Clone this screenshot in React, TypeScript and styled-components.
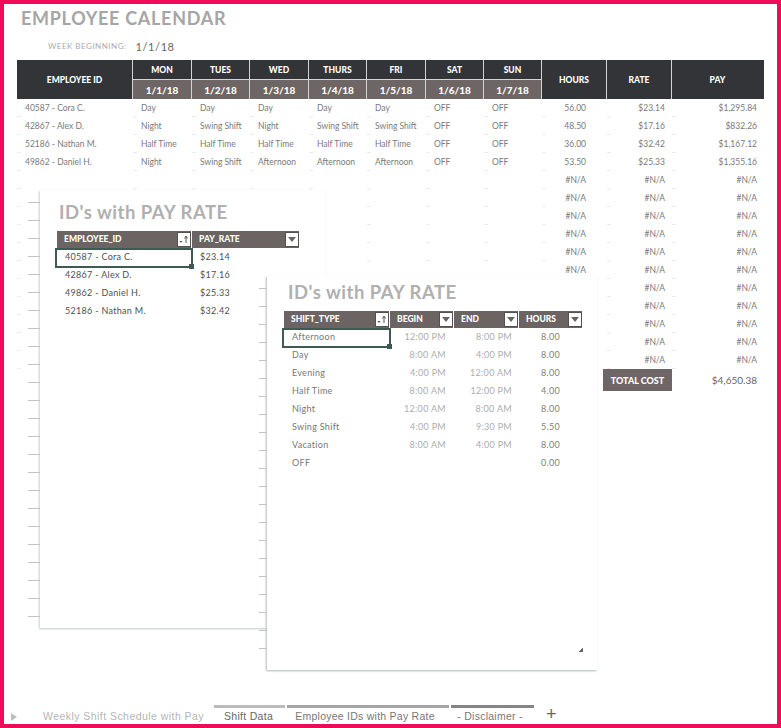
import React from "react";
import styled, { createGlobalStyle } from "styled-components";

const Global = createGlobalStyle`
  html, body { margin: 0; padding: 0; background: #fff; }
  body { font-family: "Lato", "Liberation Sans", sans-serif; }
`;

const Frame = styled.div`
  position: relative;
  width: 781px;
  height: 728px;
  box-sizing: border-box;
  border: 4px solid #ee0b58;
  background: #fff;
  display: flex;
  flex-direction: column;
  overflow: hidden;
`;

const Sheet = styled.div`
  flex: 1;
  padding: 0 0 0 13px;
`;

const Title = styled.h1`
  margin: 2px 0 0 4px;
  font-size: 18px;
  line-height: 24px;
  font-weight: 700;
  letter-spacing: 0.7px;
  color: #a6a6a6;
`;

const WeekRow = styled.div`
  display: flex;
  align-items: center;
  gap: 9px;
  height: 18px;
  margin: 7px 0 5px 31px;
`;

const WeekLabel = styled.span`
  font-size: 8px;
  letter-spacing: 0.5px;
  color: #aaa;
`;

const WeekValue = styled.span`
  font-size: 11px;
  letter-spacing: 0.6px;
  color: #666;
`;

const COLS = "116px 59px 58px 59px 58px 59px 58px 58px 65px 65px 92px";

const HeadGrid = styled.div`
  display: grid;
  grid-template-columns: ${COLS};
  grid-template-rows: 19px 20px;
  width: 747px;
  height: 39px;
`;

const HeadCell = styled.div<{ $col: number; $span?: boolean; $date?: boolean }>`
  display: flex;
  align-items: center;
  justify-content: center;
  grid-column: ${(p) => p.$col};
  grid-row: ${(p) => (p.$span ? "1 / span 2" : p.$date ? "2" : "1")};
  background: ${(p) => (p.$date ? "#6e6664" : "#333438")};
  color: #fff;
  font-size: ${(p) => (p.$date ? 10 : 8.5)}px;
  font-weight: 900;
  box-sizing: border-box;
  border-right: 1px solid ${(p) => (p.$col === 11 ? "transparent" : "#d4d4d4")};
  border-top: ${(p) => (p.$date ? "1px solid #d4d4d4" : "0")};
`;

const Row = styled.div`
  display: grid;
  grid-template-columns: ${COLS};
  width: 747px;
  height: 18px;
`;

const Cell = styled.div<{ $right?: number }>`
  position: relative;
  font-size: 8.5px;
  line-height: 18px;
  font-weight: 400;
  color: #7a7a7a;
  white-space: nowrap;
  overflow: hidden;
  box-sizing: border-box;
  text-align: ${(p) => (p.$right !== undefined ? "right" : "left")};
  padding: ${(p) => (p.$right !== undefined ? `0 ${p.$right}px 0 0` : "0 0 0 8px")};
  &::after {
    content: "";
    position: absolute;
    left: 0;
    bottom: 0;
    width: 4px;
    height: 1px;
    background: #ececec;
  }
`;

const TotalRow = styled.div`
  display: grid;
  grid-template-columns: 586px 69px 92px;
  width: 747px;
  height: 22px;
`;

const TotalLabel = styled.div`
  grid-column: 2;
  display: flex;
  align-items: center;
  justify-content: center;
  background: #6e6664;
  color: #fff;
  font-size: 9px;
  font-weight: 900;
`;

const TotalValue = styled.div`
  text-align: right;
  padding-right: 7px;
  font-size: 10px;
  line-height: 22px;
  color: #666;
`;

const Panel = styled.div<{ $x: number; $y: number; $w: number; $h: number; $shade: string; $tick: number }>`
  position: absolute;
  left: ${(p) => p.$x}px;
  top: ${(p) => p.$y}px;
  width: ${(p) => p.$w}px;
  height: ${(p) => p.$h}px;
  box-sizing: border-box;
  background: #fff;
  box-shadow: -1px 1px 2px ${(p) => p.$shade}, 0 1px 1px rgba(170, 185, 185, 0.2);
  &::before {
    content: "";
    position: absolute;
    left: -${(p) => p.$tick}px;
    top: 12px;
    bottom: 8px;
    width: ${(p) => p.$tick}px;
    background: repeating-linear-gradient(to bottom, #c4c4c4 0 1px, transparent 1px 18px);
  }
`;

const PanelTitle = styled.div<{ $x: number; $top: number; $color: string }>`
  margin: ${(p) => p.$top}px 0 0 ${(p) => p.$x}px;
  font-size: 18.5px;
  line-height: 24px;
  font-weight: 700;
  letter-spacing: 0.5px;
  color: ${(p) => p.$color};
`;

const DataTable = styled.div<{ $x: number; $cols: string; $mt: number }>`
  display: grid;
  grid-template-columns: ${(p) => p.$cols};
  grid-auto-rows: 18px;
  margin: ${(p) => p.$mt}px 0 0 ${(p) => p.$x}px;
  width: max-content;
`;

const THead = styled.div`
  position: relative;
  height: 17px;
  background: #6c6462;
  color: #fff;
  font-size: 8.5px;
  font-weight: 900;
  line-height: 17px;
  padding-left: 7px;
  box-sizing: border-box;
  border-right: 1px solid #fff;
  &:last-of-type { border-right: 0; }
`;

const Filter = styled.span`
  position: absolute;
  right: 0;
  top: 1px;
  width: 14px;
  height: 15px;
  box-sizing: border-box;
  background: #fff;
  border: 1px solid #55504e;
  display: flex;
  align-items: center;
  justify-content: center;
  color: #555;
`;

const TCell = styled.div<{ $right?: number; $tone: string; $selected?: boolean }>`
  position: relative;
  box-sizing: border-box;
  font-size: 9px;
  line-height: 16px;
  color: ${(p) => p.$tone};
  white-space: nowrap;
  letter-spacing: 0.3px;
  text-align: ${(p) => (p.$right !== undefined ? "right" : "left")};
  padding: ${(p) => (p.$right !== undefined ? `0 ${p.$right}px 0 0` : "0 0 0 8px")};
  ${(p) =>
    p.$selected &&
    `
    outline: 2px solid #3f5a52;
    outline-offset: -1px;
    margin-left: -1px;
    padding-left: 9px;
    &::after {
      content: "";
      position: absolute;
      right: -2px;
      bottom: -2px;
      width: 5px;
      height: 5px;
      background: #3f5a52;
    }
  `}
`;

const Resize = styled.div`
  position: absolute;
  right: 14px;
  bottom: 18px;
  width: 4px;
  height: 4px;
  background: linear-gradient(135deg, transparent 50%, #666 50%);
`;

const Tabs = styled.div`
  position: relative;
  flex: none;
  height: 20px;
  display: flex;
  align-items: flex-end;
  font-family: "Liberation Sans", Arial, sans-serif;
  font-size: 10.5px;
  white-space: nowrap;
`;

const Arrow = styled.span`
  width: 0;
  height: 0;
  margin: 0 0 3px 7px;
  border-left: 6px solid #bdbdbd;
  border-top: 4px solid transparent;
  border-bottom: 4px solid transparent;
`;

const Tab = styled.div<{ $w: number; $bar?: string; $color: string; $ml?: number; $space: number; $padL?: number; $padR?: number }>`
  width: ${(p) => p.$w}px;
  margin-left: ${(p) => p.$ml ?? 0}px;
  height: 19px;
  box-sizing: border-box;
  border-top: 3px solid ${(p) => p.$bar ?? "transparent"};
  color: ${(p) => p.$color};
  letter-spacing: ${(p) => p.$space}px;
  line-height: 17px;
  text-align: center;
  padding: 0 ${(p) => p.$padR ?? 0}px 0 ${(p) => p.$padL ?? 0}px;
`;

const Plus = styled.span`
  margin-left: 12px;
  font-size: 18px;
  line-height: 15px;
  color: #666;
  height: 17px;
`;

const Drop = () => (
  <Filter>
    <svg width="8" height="5" viewBox="0 0 8 5"><path d="M0 0h8L4 5z" fill="#666" /></svg>
  </Filter>
);

const SortDrop = () => (
  <Filter>
    <svg width="10" height="9" viewBox="0 0 10 9">
      <path d="M0.5 6h3L2 8z" fill="#555" />
      <path d="M7 8V2M5.5 3.5L7 1l1.5 2.5" stroke="#555" strokeWidth="1" fill="none" />
    </svg>
  </Filter>
);

const days = [
  ["MON", "1/1/18"], ["TUES", "1/2/18"], ["WED", "1/3/18"], ["THURS", "1/4/18"],
  ["FRI", "1/5/18"], ["SAT", "1/6/18"], ["SUN", "1/7/18"],
];

const people = [
  ["40587 - Cora C.", "Day", "Day", "Day", "Day", "Day", "OFF", "OFF", "56.00", "$23.14", "$1,295.84"],
  ["42867 - Alex D.", "Night", "Swing Shift", "Night", "Swing Shift", "Swing Shift", "OFF", "OFF", "48.50", "$17.16", "$832.26"],
  ["52186 - Nathan M.", "Half Time", "Half Time", "Half Time", "Half Time", "Half Time", "OFF", "OFF", "36.00", "$32.42", "$1,167.12"],
  ["49862 - Daniel H.", "Night", "Swing Shift", "Afternoon", "Afternoon", "Afternoon", "OFF", "OFF", "53.50", "$25.33", "$1,355.16"],
];
const blank = ["", "", "", "", "", "", "", "", "#N/A", "#N/A", "#N/A"];
const rows = [...people, ...Array.from({ length: 11 }, () => blank)];
const rightPad: Record<number, number> = { 8: 21, 9: 7, 10: 7 };

const payRates = [
  ["40587 - Cora C.", "$23.14"],
  ["42867 - Alex D.", "$17.16"],
  ["49862 - Daniel H.", "$25.33"],
  ["52186 - Nathan M.", "$32.42"],
];

const shifts = [
  ["Afternoon", "12:00 PM", "8:00 PM", "8.00"],
  ["Day", "8:00 AM", "4:00 PM", "8.00"],
  ["Evening", "4:00 PM", "12:00 AM", "8.00"],
  ["Half Time", "8:00 AM", "12:00 PM", "4.00"],
  ["Night", "12:00 AM", "8:00 AM", "8.00"],
  ["Swing Shift", "4:00 PM", "9:30 PM", "5.50"],
  ["Vacation", "8:00 AM", "4:00 PM", "8.00"],
  ["OFF", "", "", "0.00"],
];

export default function App() {
  return (
    <Frame>
      <Global />
      <Sheet>
        <Title>EMPLOYEE CALENDAR</Title>
        <WeekRow>
          <WeekLabel>WEEK BEGINNING:</WeekLabel>
          <WeekValue>1/1/18</WeekValue>
        </WeekRow>
        <HeadGrid>
          <HeadCell $col={1} $span>EMPLOYEE ID</HeadCell>
          {days.map(([d], i) => <HeadCell $col={i + 2} key={d}>{d}</HeadCell>)}
          {days.map(([, date], i) => <HeadCell $col={i + 2} $date key={date}>{date}</HeadCell>)}
          <HeadCell $col={9} $span>HOURS</HeadCell>
          <HeadCell $col={10} $span>RATE</HeadCell>
          <HeadCell $col={11} $span>PAY</HeadCell>
        </HeadGrid>
        {rows.map((r, i) => (
          <Row key={i}>
            {r.map((c, j) => (
              <Cell key={j} $right={rightPad[j]}>{c}</Cell>
            ))}
          </Row>
        ))}
        <TotalRow>
          <TotalLabel>TOTAL COST</TotalLabel>
          <TotalValue>$4,650.38</TotalValue>
        </TotalRow>
      </Sheet>

      <Panel $x={36} $y={186} $w={285} $h={438} $shade="#c3d1cf" $tick={12}>
        <PanelTitle $x={19} $top={10} $color="#b0b0b0">ID's with PAY RATE</PanelTitle>
        <DataTable $x={17} $cols="135px 108px" $mt={7}>
          <THead>EMPLOYEE_ID<SortDrop /></THead>
          <THead>PAY_RATE<Drop /></THead>
          {payRates.map(([a, b], i) => (
            <React.Fragment key={a}>
              <TCell $selected={i === 0} $tone="#4f4f4f">{a}</TCell>
              <TCell $tone="#4f4f4f">{b}</TCell>
            </React.Fragment>
          ))}
        </DataTable>
      </Panel>

      <Panel $x={263} $y={272} $w={330} $h={394} $shade="#b3bdbb" $tick={8}>
        <PanelTitle $x={21} $top={4} $color="#b0b0b0">ID's with PAY RATE</PanelTitle>
        <DataTable $x={17} $cols="106px 64px 65px 64px" $mt={7}>
          <THead>SHIFT_TYPE<SortDrop /></THead>
          <THead>BEGIN<Drop /></THead>
          <THead>END<Drop /></THead>
          <THead>HOURS<Drop /></THead>
          {shifts.map(([a, b, c, d], i) => (
            <React.Fragment key={a}>
              <TCell $selected={i === 0} $tone="#777">{a}</TCell>
              <TCell $right={8} $tone="#adadad">{b}</TCell>
              <TCell $right={7} $tone="#adadad">{c}</TCell>
              <TCell $right={23} $tone="#808080">{d}</TCell>
            </React.Fragment>
          ))}
        </DataTable>
        <Resize />
      </Panel>

      <Tabs>
        <Arrow />
        <Tab $w={197} $color="#b5b5b5" $space={0.45} $padL={16}>Weekly Shift Schedule with Pay</Tab>
        <Tab $w={71} $bar="#bcbcbc" $color="#666" $space={0.3} $padR={2}>Shift Data</Tab>
        <Tab $w={162} $ml={2} $bar="#a6a6a6" $color="#777" $space={0.25} $padR={6}>Employee IDs with Pay Rate</Tab>
        <Tab $w={83} $ml={2} $bar="#858585" $color="#777" $space={0.25} $padR={5}>- Disclaimer -</Tab>
        <Plus>+</Plus>
      </Tabs>
    </Frame>
  );
}
